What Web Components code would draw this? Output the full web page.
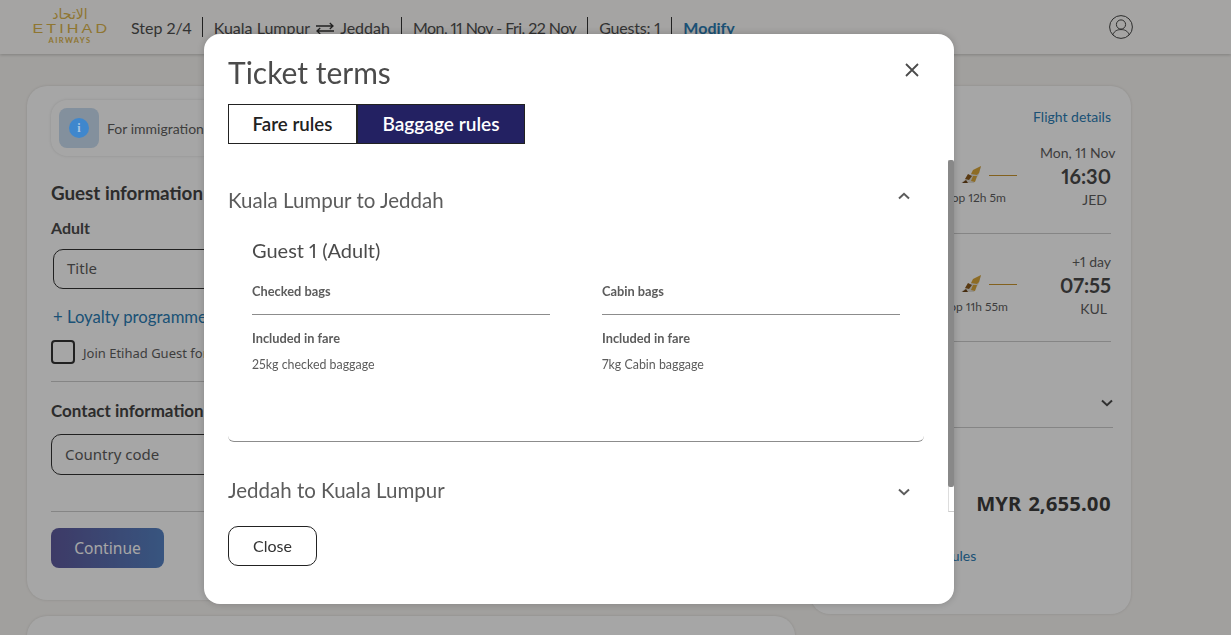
<!DOCTYPE html>
<html lang="en">
<head>
<meta charset="utf-8">
<title>Ticket terms</title>
<style>
  html, body { margin: 0; height: 100%; overflow: hidden; }
  body { background: #f8f6f3; font-family: Lato, "Noto Sans", sans-serif; font-variant-numeric: proportional-nums; color: #4b4b4b; }
</style>
</head>
<body>
<site-header></site-header>
<booking-page></booking-page>
<terms-modal></terms-modal>

<script>
const TAIL_ICON = /* html */`
  <svg width="22" height="18" viewBox="0 0 22 18" aria-hidden="true">
    <path d="M21 0 L19 8 L14 17 L1 17 Z" fill="#e2dfd8"/>
    <path d="M21 0 L13 4 L11 8 L17 9 L19 7 Z" fill="#d9a63a"/>
    <path d="M8 8 L12 10 L9 14 L5 13 Z" fill="#8a5a1c"/>
    <path d="M13 10 L17 10 L15 16 L11 15 Z" fill="#d9a63a"/>
    <path d="M2 17 L6 14 L8 17 Z" fill="#6b4216"/>
  </svg>`;

const CHEVRON_DOWN = /* html */`
  <svg width="12" height="8" viewBox="0 0 12 8" aria-hidden="true"><path d="M1 1.5 L6 6.2 L11 1.5" fill="none" stroke="currentColor" stroke-width="2"/></svg>`;

const CHEVRON_UP = /* html */`
  <svg width="12" height="8" viewBox="0 0 12 8" aria-hidden="true"><path d="M1 6.5 L6 1.8 L11 6.5" fill="none" stroke="currentColor" stroke-width="2"/></svg>`;

class SiteHeader extends HTMLElement {
  constructor() {
    super();
    this.attachShadow({ mode: "open" });
  }

  connectedCallback() {
    this.shadowRoot.innerHTML = /* html */`
    <style>
      :host {
        display: flex;
        align-items: center;
        height: 54px;
        padding-left: 32px;
        padding-right: 98px;
        background: #fdfcfa;
        box-shadow: 0 1px 3px #0003;
        position: relative;
      }
      .logo {
        width: 76px;
        display: flex;
        flex-direction: column;
        align-items: center;
        color: #dcb54c;
        line-height: 1;
        margin-right: 23px;
        margin-top: -3px;
      }
      .ar { font-family: "DejaVu Sans", sans-serif; font-size: 14px; height: 14px; line-height: 14px; }
      .en { font-family: "Liberation Sans", sans-serif; font-size: 13px; height: 13px; line-height: 13px; margin-top: 1px; letter-spacing: 2.5px; transform: scaleX(1.24); margin-right: -2px; }
      .sub { font-family: Lato, sans-serif; font-size: 7.5px; height: 7px; line-height: 7px; font-weight: 700; letter-spacing: 1.4px; margin-top: 2px; }
      nav { display: flex; align-items: center; flex: 1; font-size: 16px; color: #4f4f4f; height: 20px; }
      nav span { box-sizing: border-box; height: 20px; padding: 2px 11px 0; border-left: 1px solid #333; line-height: 20px; white-space: nowrap; display: flex; align-items: center; gap: 5px; }
      nav span:first-child { border-left: 0; padding: 2px 10px 0 0; }
      nav .dates { letter-spacing: -.55px; }
      nav .guests { letter-spacing: -.2px; }
      nav .modify { color: #2b7db5; font-weight: 700; }
      .user { width: 24px; height: 24px; display: block; }
    </style>
    <div class="logo">
      <div class="ar" dir="rtl">الاتحاد</div>
      <div class="en">ETIHAD</div>
      <div class="sub">AIRWAYS</div>
    </div>
    <nav>
      <span>Step 2/4</span>
      <span>Kuala Lumpur
        <svg width="20" height="12" viewBox="0 0 20 12" aria-hidden="true"><path d="M1 4 H18 M14.8 1 L18 4 L14.8 7 M19 9 H2 M5.2 6 L2 9 L5.2 12" fill="none" stroke="#333" stroke-width="1.3"/></svg>
        Jeddah</span>
      <span class="dates">Mon, 11 Nov - Fri, 22 Nov</span>
      <span class="guests">Guests: 1</span>
      <span class="modify">Modify</span>
    </nav>
    <svg class="user" viewBox="0 0 24 24" fill="none" stroke="#444" stroke-width="1" aria-hidden="true">
      <circle cx="12" cy="12" r="11.4"/>
      <circle cx="12" cy="9.5" r="4.6"/>
      <path d="M3.8 19.8 C5.5 15.6 8.5 14.6 12 14.6 S18.5 15.6 20.2 19.8"/>
    </svg>`;
  }
}

class InputBox extends HTMLElement {
  constructor() {
    super();
    this.attachShadow({ mode: "open" });
    this.shadowRoot.innerHTML = /* html */`
    <style>
      :host {
        display: flex;
        align-items: center;
        box-sizing: border-box;
        width: 300px;
        padding: 0 0 2px 13px;
        border: 1px solid #333;
        border-radius: 10px;
        font-family: "Noto Sans", sans-serif;
        font-size: 15px;
        color: #5d5d5d;
      }
    </style>
    <slot></slot>`;
  }
}

class BookingPage extends HTMLElement {
  constructor() {
    super();
    this.attachShadow({ mode: "open" });
  }

  connectedCallback() {
    this.shadowRoot.innerHTML = /* html */`
    <style>
      :host {
        display: grid;
        grid-template-columns: 768px 321px;
        column-gap: 15px;
        box-sizing: border-box;
        height: 581px;
        overflow: hidden;
        padding: 32px 0 0 27px;
        align-items: start;
      }
      .card {
        box-sizing: border-box;
        background: #fff;
        border-radius: 20px;
        box-shadow: 0 0 3px #0002;
      }
      .left { display: flex; flex-direction: column; gap: 16px; }
      .form { height: 514px; padding: 14px 24px 0; }
      .next { height: 60px; }
      .notice {
        display: flex;
        align-items: center;
        gap: 8px;
        height: 56px;
        padding-left: 8px;
        border-radius: 16px;
        box-shadow: 0 0 3px #0002;
        font-size: 14px;
        color: #5f5f5f;
        margin-bottom: 27px;
      }
      .info-tile {
        width: 40px;
        height: 40px;
        border-radius: 8px;
        background: #c9ddf1;
        display: grid;
        place-items: center;
      }
      .info-dot {
        position: relative;
        z-index: 1;
        width: 20px;
        height: 20px;
        border-radius: 50%;
        background: #3f87cd;
        color: #a9c6e4;
        font: 700 12px/20px "Liberation Serif", serif;
        text-align: center;
      }
      h2 { font-size: 17px; font-weight: 700; margin: 0; line-height: 20px; color: #444; white-space: nowrap; }
      h2.guest { font-size: 18.8px; }
      h3 { font-size: 16px; font-weight: 700; margin: 15px 0 11px; line-height: 20px; color: #4c4c4c; }
      .title-box { height: 40px; margin-left: 2px; }
      .link { color: #2b7db5; font-size: 16.7px; line-height: 20px; margin: 18px 0 0 2px; white-space: nowrap; }
      .join {
        display: flex;
        align-items: center;
        gap: 8px;
        margin-top: 13px;
        font-family: "Noto Sans", sans-serif;
        font-size: 13px;
        color: #5f5f5f;
        white-space: nowrap;
      }
      .join b { font-weight: 400; padding-top: 1px; }
      .check { width: 20px; height: 20px; border: 2px solid #333; border-radius: 4px; }
      hr { border: 0; border-top: 1px solid #ccc; margin: 0; }
      .contact-rule { margin: 17px 0 19px; }
      .country { height: 41px; margin-top: 13px; }
      .continue-rule { margin: 36px 0 16px; }
      .continue {
        display: grid;
        place-items: center;
        width: 113px;
        height: 40px;
        border-radius: 8px;
        background: linear-gradient(90deg, #5f5a9e, #5683c4);
        color: #fff;
        font-family: "Noto Sans", sans-serif;
        font-size: 15.6px;
      }
      .right { height: 528px; padding: 20px 20px 0 96px; position: relative; }
      .details { text-align: right; color: #2b7db5; font-size: 14px; line-height: 22px; }
      .leg {
        display: grid;
        grid-template-columns: minmax(0, 1fr) 71px;
        padding-top: 16px;
        height: 89px;
      }
      .leg + .leg { border-top: 1px solid #ccc; border-bottom: 1px solid #ccc; padding-top: 19px; height: 88px; }
      .route { display: flex; flex-direction: column; align-items: flex-end; padding-top: 22px; padding-right: 34px; font-size: 12px; color: #5f5f5f; white-space: nowrap; }
      .leg + .leg .route { padding-top: 22px; padding-right: 32px; }
      .leg + .leg .flight { margin-right: -9px; }
      .route .flight { display: flex; align-items: center; gap: 7px; margin-bottom: 6px; margin-right: -11px; }
      .route .line { width: 28px; height: 1px; background: #c9962f; }
      .times { text-align: right; white-space: nowrap; }
      .times div:first-child { font-size: 14px; line-height: 18px; color: #5f5f5f; }
      .times .hour { font-size: 20px; font-weight: 700; line-height: 28px; color: #4b4b4b; }
      .times .code { font-size: 14px; line-height: 20px; padding-right: 4px; color: #5f5f5f; }
      .expand { display: flex; justify-content: flex-end; align-items: center; height: 86px; border-bottom: 1px solid #ccc; color: #4b4b4b; margin-right: -2px; box-sizing: border-box; }
      .expand svg { margin-top: 36px; }
      .price { text-align: right; font-family: "Noto Sans", sans-serif; font-size: 20.2px; font-weight: 700; color: #3c3c3c; margin-top: 60px; word-spacing: 2px; line-height: 30px; }
      .fare-link { position: absolute; left: 107px; top: 461px; color: #2b7db5; font-size: 14px; }
    </style>
    <div class="left">
      <section class="card form">
        <div class="notice">
          <div class="info-tile"><div class="info-dot">i</div></div>
          <span>For immigration</span>
        </div>
        <h2 class="guest">Guest information</h2>
        <h3>Adult</h3>
        <input-box class="title-box">Title</input-box>
        <div class="link">+ Loyalty programme</div>
        <label class="join"><span class="check"></span><b>Join Etihad Guest for</b></label>
        <hr class="contact-rule">
        <h2>Contact information</h2>
        <input-box class="country">Country code</input-box>
        <hr class="continue-rule">
        <div class="continue">Continue</div>
      </section>
      <section class="card next"></section>
    </div>
    <aside class="card right">
      <div class="details">Flight details</div>
      <div class="leg">
        <div class="route">
          <div class="flight">${TAIL_ICON}<span class="line"></span></div>
          <span>1 stop 12h 5m</span>
        </div>
        <div class="times"><div>Mon, 11 Nov</div><div class="hour">16:30</div><div class="code">JED</div></div>
      </div>
      <div class="leg">
        <div class="route">
          <div class="flight">${TAIL_ICON}<span class="line"></span></div>
          <span>1 stop 11h 55m</span>
        </div>
        <div class="times"><div>+1 day</div><div class="hour">07:55</div><div class="code">KUL</div></div>
      </div>
      <div class="expand">${CHEVRON_DOWN}</div>
      <div class="price">MYR 2,655.00</div>
      <div class="fare-link">Fare rules</div>
    </aside>`;
  }
}

class BagColumn extends HTMLElement {
  constructor() {
    super();
    this.attachShadow({ mode: "open" });
  }

  connectedCallback() {
    this.shadowRoot.innerHTML = /* html */`
    <style>
      :host { display: block; width: 298px; font-size: 12.4px; color: #5c5c5c; }
      .head { font-size: 12.8px; font-weight: 700; line-height: 16px; padding-bottom: 15px; border-bottom: 1px solid #8c8c8c; }
      .sub { font-size: 12.8px; font-weight: 700; line-height: 16px; margin-top: 15px; }
      .note { line-height: 16px; margin-top: 11px; }
    </style>
    <div class="head">${this.getAttribute("heading")}</div>
    <div class="sub">Included in fare</div>
    <div class="note">${this.getAttribute("note")}</div>`;
  }
}

class TermsModal extends HTMLElement {
  constructor() {
    super();
    this.attachShadow({ mode: "open" });
  }

  connectedCallback() {
    this.shadowRoot.innerHTML = /* html */`
    <style>
      :host {
        position: fixed;
        inset: 0;
        z-index: 0;
        background: #00000059;
        display: block;
      }
      .dialog {
        position: absolute;
        left: 204px;
        top: 34px;
        width: 750px;
        height: 570px;
        background: #fff;
        border-radius: 16px;
        display: flex;
        flex-direction: column;
        box-shadow: 0 0 8px #0003;
        overflow: hidden;
      }
      header { display: flex; justify-content: space-between; align-items: center; margin: 18px 35px 12px 24px; height: 40px; }
      h1 { font-size: 30px; font-weight: 400; margin: 0; color: #4b4b4b; }
      .close-x { color: #4b4b4b; display: block; margin-top: -4px; }
      .tabs { display: flex; margin: 0 24px 16px; height: 40px; }
      .tab { display: grid; place-items: center; box-sizing: border-box; padding-bottom: 1px; border: 1px solid #222; font-size: 18.7px; font-weight: 600; }
      .tab.off { width: 129px; color: #222; background: #fff; }
      .tab.on { width: 168px; color: #fff; background: #232162; font-size: 19.1px; }
      .scroller { height: 352px; width: 696px; margin-left: 24px; overflow: hidden; }
      .track { position: absolute; left: 744px; top: 126px; width: 6px; height: 352px; box-sizing: border-box; border-left: 1px solid #ddd; border-bottom: 1px solid #ccc; }
      .thumb { position: absolute; left: -1px; top: 0; width: 6px; height: 327px; background: #888; border-radius: 2px; }
      .acc-head { display: flex; justify-content: space-between; align-items: center; height: 79px; font-size: 20.5px; color: #5c5c5c; padding-right: 14px; }
      .up svg { margin-top: -7px; }
      .down { height: 96px; }
      .down svg { margin-top: 4px; }
      .acc-body { padding: 0 24px; border-bottom: 1px solid #8c8c8c; border-radius: 0 0 6px 6px; height: 202px; }
      .acc-body h4 { font-size: 20px; font-weight: 400; margin: 0 0 22px; color: #4b4b4b; line-height: 22px; }
      .cols { display: flex; gap: 52px; }
      .foot { padding: 14px 24px 0; }
      .close-btn { display: grid; place-items: center; width: 89px; height: 40px; box-sizing: border-box; padding-bottom: 1px; border: 1px solid #222; border-radius: 10px; font-size: 16px; color: #333; }
    </style>
    <div class="dialog" role="dialog">
      <header>
        <h1>Ticket terms</h1>
        <svg class="close-x" width="14" height="14" viewBox="0 0 14 14" aria-hidden="true"><path d="M1 1 L13 13 M13 1 L1 13" stroke="currentColor" stroke-width="1.8" fill="none"/></svg>
      </header>
      <div class="tabs">
        <div class="tab off">Fare rules</div>
        <div class="tab on">Baggage rules</div>
      </div>
      <div class="scroller">
        <div class="acc-head up"><span>Kuala Lumpur to Jeddah</span>${CHEVRON_UP}</div>
        <div class="acc-body">
          <h4>Guest 1 (Adult)</h4>
          <div class="cols">
            <bag-column heading="Checked bags" note="25kg checked baggage"></bag-column>
            <bag-column heading="Cabin bags" note="7kg Cabin baggage"></bag-column>
          </div>
        </div>
        <div class="acc-head down"><span>Jeddah to Kuala Lumpur</span>${CHEVRON_DOWN}</div>
      </div>
      <div class="track"><div class="thumb"></div></div>
      <div class="foot"><div class="close-btn">Close</div></div>
    </div>`;
  }
}

customElements.define("site-header", SiteHeader);
customElements.define("input-box", InputBox);
customElements.define("booking-page", BookingPage);
customElements.define("bag-column", BagColumn);
customElements.define("terms-modal", TermsModal);
</script>
</body>
</html>
